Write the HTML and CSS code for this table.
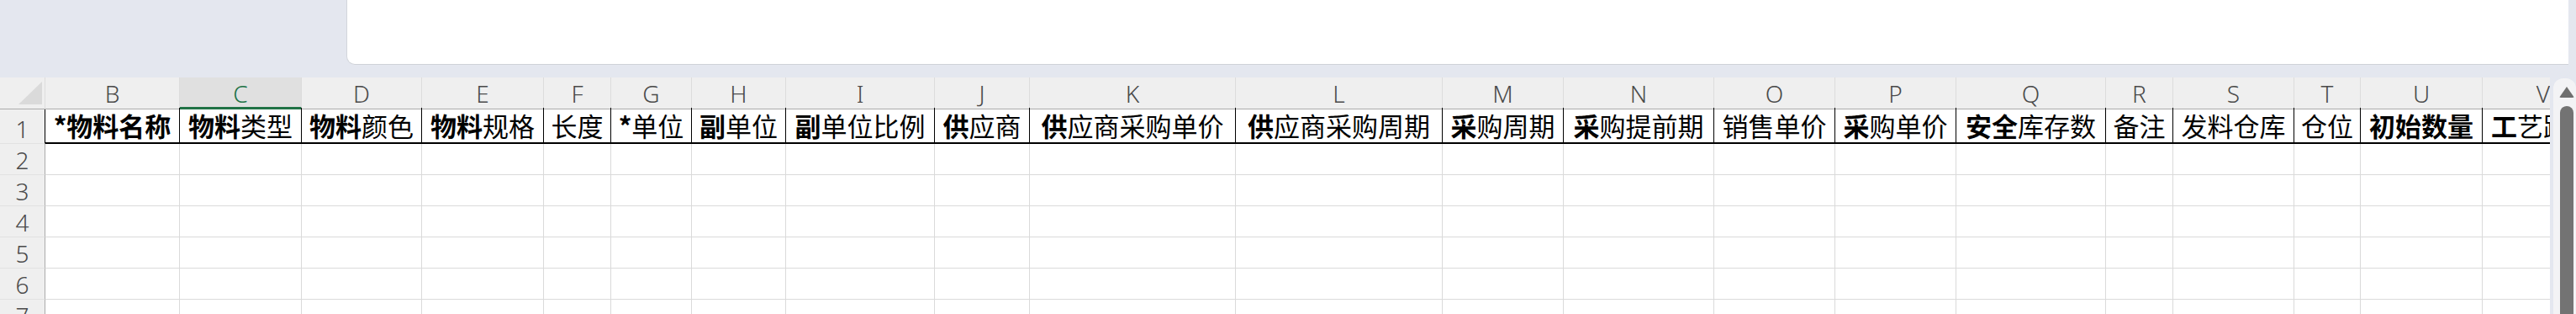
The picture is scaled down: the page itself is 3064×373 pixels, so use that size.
FILE: index.html
```html
<!DOCTYPE html>
<html lang="zh-CN">
<head>
<meta charset="utf-8">
<title>物料导入模板</title>
<link rel="stylesheet" href="styles.css">
</head>
<body>
<div class="top">
  <div class="panel"></div>
</div>
<div class="main">
  <div class="sheet">
    <div class="row head">
      <div class="corner"><span class="tri"></span></div>
      <div class="ch">B</div><div class="ch sel">C</div><div class="ch">D</div><div class="ch">E</div>
      <div class="ch">F</div><div class="ch">G</div><div class="ch">H</div><div class="ch">I</div>
      <div class="ch">J</div><div class="ch">K</div><div class="ch">L</div><div class="ch">M</div>
      <div class="ch">N</div><div class="ch">O</div><div class="ch">P</div><div class="ch">Q</div>
      <div class="ch">R</div><div class="ch">S</div><div class="ch">T</div><div class="ch">U</div>
      <div class="ch">V</div>
    </div>
    <div class="row r1">
      <div class="rh">1</div>
      <div class="c"><b>*物料名称</b></div>
      <div class="c"><b>物料</b>类型</div>
      <div class="c"><b>物料</b>颜色</div>
      <div class="c"><b>物料</b>规格</div>
      <div class="c">长度</div>
      <div class="c"><b>*</b>单位</div>
      <div class="c"><b>副</b>单位</div>
      <div class="c"><b>副</b>单位比例</div>
      <div class="c"><b>供</b>应商</div>
      <div class="c"><b>供</b>应商采购单价</div>
      <div class="c"><b>供</b>应商采购周期</div>
      <div class="c"><b>采</b>购周期</div>
      <div class="c"><b>采</b>购提前期</div>
      <div class="c">销售单价</div>
      <div class="c"><b>采</b>购单价</div>
      <div class="c"><b>安全</b>库存数</div>
      <div class="c">备注</div>
      <div class="c">发料仓库</div>
      <div class="c">仓位</div>
      <div class="c"><b>初始数量</b></div>
      <div class="c"><b>工</b>艺路线</div>
    </div>
    <div class="row"><div class="rh">2</div><div class="c"></div><div class="c"></div><div class="c"></div><div class="c"></div><div class="c"></div><div class="c"></div><div class="c"></div><div class="c"></div><div class="c"></div><div class="c"></div><div class="c"></div><div class="c"></div><div class="c"></div><div class="c"></div><div class="c"></div><div class="c"></div><div class="c"></div><div class="c"></div><div class="c"></div><div class="c"></div><div class="c"></div></div>
    <div class="row"><div class="rh">3</div><div class="c"></div><div class="c"></div><div class="c"></div><div class="c"></div><div class="c"></div><div class="c"></div><div class="c"></div><div class="c"></div><div class="c"></div><div class="c"></div><div class="c"></div><div class="c"></div><div class="c"></div><div class="c"></div><div class="c"></div><div class="c"></div><div class="c"></div><div class="c"></div><div class="c"></div><div class="c"></div><div class="c"></div></div>
    <div class="row"><div class="rh">4</div><div class="c"></div><div class="c"></div><div class="c"></div><div class="c"></div><div class="c"></div><div class="c"></div><div class="c"></div><div class="c"></div><div class="c"></div><div class="c"></div><div class="c"></div><div class="c"></div><div class="c"></div><div class="c"></div><div class="c"></div><div class="c"></div><div class="c"></div><div class="c"></div><div class="c"></div><div class="c"></div><div class="c"></div></div>
    <div class="row"><div class="rh">5</div><div class="c"></div><div class="c"></div><div class="c"></div><div class="c"></div><div class="c"></div><div class="c"></div><div class="c"></div><div class="c"></div><div class="c"></div><div class="c"></div><div class="c"></div><div class="c"></div><div class="c"></div><div class="c"></div><div class="c"></div><div class="c"></div><div class="c"></div><div class="c"></div><div class="c"></div><div class="c"></div><div class="c"></div></div>
    <div class="row"><div class="rh">6</div><div class="c"></div><div class="c"></div><div class="c"></div><div class="c"></div><div class="c"></div><div class="c"></div><div class="c"></div><div class="c"></div><div class="c"></div><div class="c"></div><div class="c"></div><div class="c"></div><div class="c"></div><div class="c"></div><div class="c"></div><div class="c"></div><div class="c"></div><div class="c"></div><div class="c"></div><div class="c"></div><div class="c"></div></div>
    <div class="row"><div class="rh">7</div><div class="c"></div><div class="c"></div><div class="c"></div><div class="c"></div><div class="c"></div><div class="c"></div><div class="c"></div><div class="c"></div><div class="c"></div><div class="c"></div><div class="c"></div><div class="c"></div><div class="c"></div><div class="c"></div><div class="c"></div><div class="c"></div><div class="c"></div><div class="c"></div><div class="c"></div><div class="c"></div><div class="c"></div></div>
  </div>
  <div class="vscroll">
    <div class="track">
      <span class="up"></span>
      <span class="thumb"></span>
    </div>
  </div>
</div>
</body>
</html>
```
FILE: styles.css
```css
* { box-sizing: border-box; }
html, body { margin: 0; padding: 0; }
body {
  background: #e4e7ef;
  width: 3064px;
  height: 373px;
  overflow: hidden;
  font-family: "Noto Sans CJK SC", "Noto Sans", sans-serif;
}
.top {
  height: 92px;
  padding-left: 412px;
  padding-right: 9px;
}
.panel {
  height: 77px;
  background: #ffffff;
  border-left: 1px solid #d3d6dc;
  border-bottom: 1px solid #cfd2d8;
  border-bottom-left-radius: 10px;
}
.main {
  display: flex;
  height: 281px;
}
.sheet {
  width: 3033px;
  overflow: hidden;
  background: #ffffff;
}
.row {
  display: grid;
  grid-template-columns: 54px 160px 145px 143px 145px 80px 96px 112px 177px 113px 245px 246px 144px 179px 144px 144px 178px 80px 144px 79px 145px 145px;
  height: 37px;
}
.row.head { height: 36px; }
.row.r1 { height: 43px; }

.corner {
  background: #efefef;
  border-right: 1px solid #dcdcdc;
  border-bottom: 1px solid #ababab;
  position: relative;
}
.tri {
  position: absolute;
  left: 22px;
  top: 5px;
  width: 28px;
  height: 27px;
  background: #dadada;
  clip-path: polygon(100% 0, 100% 100%, 0 100%);
}
.ch {
  background: #efefef;
  border-right: 1px solid #dcdcdc;
  border-bottom: 1px solid #ababab;
  color: #4a4a4a;
  font-family: "Noto Sans", "Open Sans", sans-serif;
  font-weight: 300;
  font-size: 28px;
  line-height: 32px;
  display: flex;
  align-items: center;
  justify-content: center;
  padding-top: 1px;
}
.ch.sel {
  background: #e0e0e0;
  color: #217346;
  border-bottom: 3px solid #217346;
  padding-top: 3px;
}
.rh {
  background: #efefef;
  border-right: 1px solid #ababab;
  border-bottom: 1px solid #e2e2e2;
  color: #4a4a4a;
  font-family: "Noto Sans", "Open Sans", sans-serif;
  font-weight: 300;
  font-size: 28px;
  line-height: 32px;
  display: flex;
  align-items: center;
  justify-content: center;
  padding-top: 2px;
}
.c {
  border-right: 1px solid #dadada;
  border-bottom: 1px solid #dadada;
}
.r1 .rh { border-right-color: #000000; padding-top: 8px; }
.r1 .c {
  border-right: 1px solid #000000;
  border-bottom: 2px solid #000000;
  color: #000000;
  font-size: 31px;
  line-height: 40px;
  font-weight: 400;
  display: flex;
  align-items: center;
  justify-content: center;
  white-space: nowrap;
}
.r1 b { font-weight: 700; }

.vscroll {
  width: 31px;
  padding-left: 4px;
  padding-top: 1px;
}
.track {
  height: 100%;
  background: #f3f3f5;
  border-top-left-radius: 12px;
  border-top-right-radius: 12px;
  display: flex;
  flex-direction: column;
  align-items: flex-start;
  padding-left: 8px;
  padding-top: 10px;
}
.up {
  width: 18px;
  height: 13px;
  background: #6f6f6f;
  clip-path: polygon(50% 0, 100% 100%, 0 100%);
  margin-left: -1px;
  border-radius: 2px;
}
.thumb {
  margin-top: 10px;
  width: 16px;
  flex: 1;
  background: #737373;
  border-radius: 8px 8px 0 0;
}
```
